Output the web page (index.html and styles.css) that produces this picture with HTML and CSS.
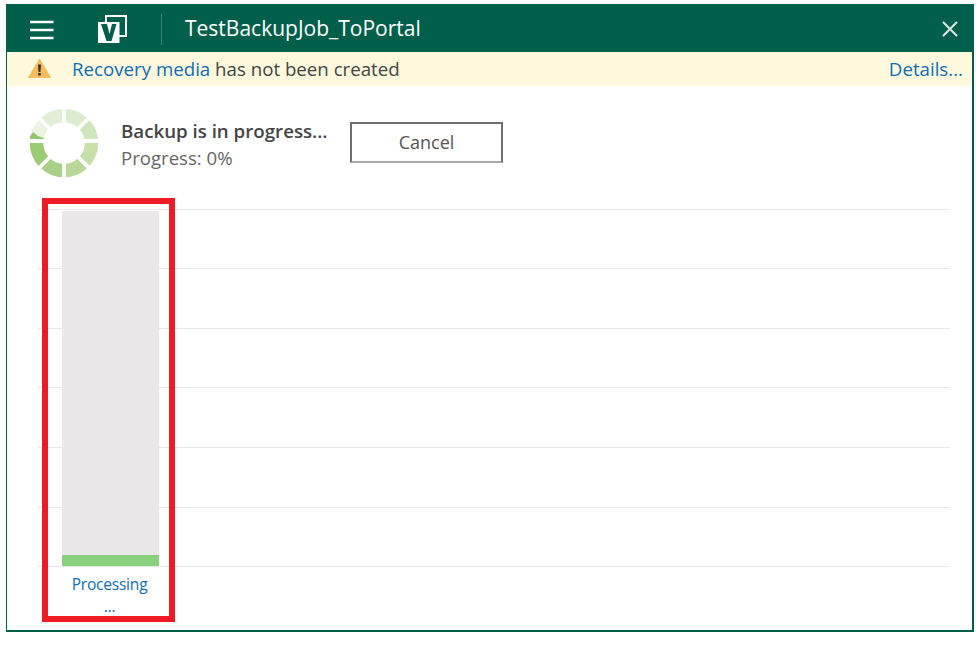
FILE: index.html
```html
<!DOCTYPE html>
<html lang="en">
<head>
<meta charset="utf-8">
<title>TestBackupJob_ToPortal</title>
<link rel="stylesheet" href="styles.css">
</head>
<body>
<main class="window">
  <header class="titlebar">
    <svg class="menu" width="24" height="20" viewBox="0 0 24 20" aria-hidden="true"><path d="M0 2h23.500M0 10h23.500M0 18h23.500" stroke="#fff" stroke-width="2.400" fill="none"/></svg>
    <svg class="logo" width="30" height="28" viewBox="0 0 30 28" aria-hidden="true">
      <rect x="8" y="1" width="20" height="20" fill="none" stroke="#fff" stroke-width="2"/>
      <rect x="0" y="7" width="21.500" height="21" fill="#fff"/>
      <path d="M3 9h6l2.500 10 2.500-10h4.500l-5 17h-5z" fill="#005f4b"/>
    </svg>
    <span class="divider"></span>
    <h1 class="title">TestBackupJob_ToPortal</h1>
    <svg class="close" width="16" height="16" viewBox="0 0 16 16" aria-hidden="true"><path d="M1 1l14 14M15 1L1 15" stroke="#dfe9e6" stroke-width="2" fill="none"/></svg>
  </header>
  <div class="notice">
    <svg class="warn" width="23" height="20" viewBox="0 0 23 20" aria-hidden="true">
      <path d="M11.500 1 22.500 19.500H0.500z" fill="#f6bd60" stroke="#f6bd60" stroke-linejoin="round"/>
      <path d="M10 6.500h3l-.5 7.500h-2zM10.200 15h2.600v2.600h-2.600z" fill="#3a3226"/>
    </svg>
    <p class="notice-text"><a class="link" href="#">Recovery media</a> has not been created</p>
    <a class="link" href="#">Details...</a>
  </div>
  <section class="status">
    <svg class="spinner" width="70" height="70" viewBox="0 0 70 70" aria-hidden="true">
      <g fill="none" stroke-width="13.500" transform="rotate(-90 35 35)">
        <circle cx="35" cy="35" r="27.500" pathLength="360" stroke-dasharray="45 315" stroke="#dcecce"/>
        <circle cx="35" cy="35" r="27.500" pathLength="360" stroke-dasharray="45 315" stroke-dashoffset="-45" stroke="#d0e5bb"/>
        <circle cx="35" cy="35" r="27.500" pathLength="360" stroke-dasharray="45 315" stroke-dashoffset="-90" stroke="#c6dfab"/>
        <circle cx="35" cy="35" r="27.500" pathLength="360" stroke-dasharray="45 315" stroke-dashoffset="-135" stroke="#b8d799"/>
        <circle cx="35" cy="35" r="27.500" pathLength="360" stroke-dasharray="45 315" stroke-dashoffset="-180" stroke="#aad088"/>
        <circle cx="35" cy="35" r="27.500" pathLength="360" stroke-dasharray="45 315" stroke-dashoffset="-225" stroke="#9ccb76"/>
        <circle cx="35" cy="35" r="27.500" pathLength="360" stroke-dasharray="45 315" stroke-dashoffset="-270" stroke="#ebf4e3"/>
        <circle cx="35" cy="35" r="27.500" pathLength="360" stroke-dasharray="45 315" stroke-dashoffset="-315" stroke="#e2efd7"/>
      </g>
      <path d="M1 33v-4.500l3-4.500 5 4 6 2 1 3z" fill="#93c76d"/>
      <path d="M35 0v70M0 33h70M10 10l50 50M60 10L10 60" stroke="#fff" stroke-width="3.800" fill="none"/>
    </svg>
    <div class="status-text">
      <strong class="status-head">Backup is in progress...</strong>
      <span class="status-sub">Progress: 0%</span>
    </div>
    <button class="cancel" type="button">Cancel</button>
  </section>
  <section class="chart">
    <div class="gridlines">
      <span class="gridline"></span><span class="gridline"></span><span class="gridline"></span><span class="gridline"></span><span class="gridline"></span><span class="gridline"></span><span class="gridline"></span>
    </div>
    <div class="column">
      <div class="bar"><div class="bar-fill"></div></div>
      <div class="column-label">Processing<br>...</div>
    </div>
    <div class="highlight"></div>
  </section>
</main>
</body>
</html>
```
FILE: styles.css
```css
* { box-sizing: border-box; }
html, body { margin: 0; padding: 0; background: #fff; }
body { padding: 4px 0 0 6px; font-family: "Open Sans", "Noto Sans", sans-serif; }
.window {
  width: 968px;
  height: 628px;
  border: 2px solid #005f4b;
  border-left-width: 1px;
  border-top: 0;
  display: flex;
  flex-direction: column;
  background: #fff;
}
.titlebar {
  height: 48px;
  margin: 0 -2px 0 -1px;
  background: #005f4b;
  display: flex;
  align-items: center;
  padding: 0 16px 0 24px;
  flex: none;
}
.menu { margin: 4px 44px 0 0; flex: none; }
.logo { flex: none; margin-top: 2px; }
.divider { width: 1px; height: 31px; background: #3a8270; margin: 3px 23px 0 33px; flex: none; }
.title { margin: 0; flex: 1; font-size: 21px; font-weight: 400; color: #fff; }
.close { flex: none; margin-top: 2px; }
.notice {
  height: 34px;
  background: #fef9dd;
  display: flex;
  align-items: center;
  padding: 0 9px 2px 21px;
  flex: none;
  font-size: 18.700px;
  color: #444;
}
.warn { flex: none; margin-right: 21px; }
.notice-text { margin: 0; flex: 1; }
.link { color: #0f6cb5; text-decoration: none; }
.status { display: flex; align-items: center; height: 112px; padding: 1px 0 0 22px; flex: none; }
.spinner { flex: none; margin-right: 22px; }
.status-text { display: flex; flex-direction: column; width: 229px; margin-top: 2px; }
.status-head { font-size: 18.700px; font-weight: 600; color: #444; line-height: 27px; }
.status-sub { font-size: 18.600px; color: #666; line-height: 27px; }
.cancel {
  width: 153px;
  height: 41px;
  padding: 0 0 2px;
  border: 2px solid #6e6e6e;
  border-bottom-color: #a8a8a8;
  background: #fff;
  font: 18px "Open Sans", "Noto Sans", sans-serif;
  color: #555;
}
.chart { position: relative; flex: 1; }
.gridlines {
  position: absolute;
  left: 31px;
  top: 10.600px;
  width: 912px;
  height: 358.600px;
  display: flex;
  flex-direction: column;
  justify-content: space-between;
}
.gridline { display: block; height: 1px; background: #e8e8e8; }
.column {
  position: absolute;
  left: 55px;
  top: 13px;
  width: 97px;
  display: flex;
  flex-direction: column;
  align-items: center;
}
.bar { width: 100%; height: 355px; background: #e9e7e8; display: flex; align-items: flex-end; }
.bar-fill { width: 100%; height: 11px; background: #89d07f; }
.column-label { font-size: 15.500px; line-height: 22px; color: #0f6cb5; text-align: center; margin-top: 7px; padding-right: 2px; letter-spacing: -0.2px; }
.highlight {
  position: absolute;
  left: 35px;
  top: 0;
  width: 133px;
  height: 424px;
  border: 6px solid #ed1c24;
}
```
